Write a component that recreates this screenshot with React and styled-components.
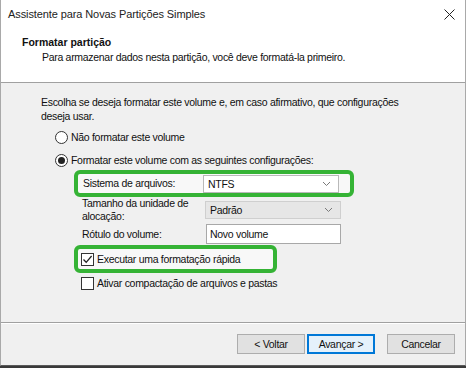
import React from "react";
import styled, { createGlobalStyle, css } from "styled-components";

const GlobalStyle = createGlobalStyle`
  html, body {
    margin: 0;
    padding: 0;
    background: #3a3a3a;
  }
  * { box-sizing: border-box; }
`;

const green = "#35b335";

const Window = styled.div`
  width: 466px;
  height: 366px;
  display: flex;
  flex-direction: column;
  background: #f0f0f0;
  border-left: 1px solid #a9a9a9;
  border-right: 1px solid #a9a9a9;
  border-bottom: 1px solid #5a5a5a;
  font-family: "Liberation Sans", Arial, sans-serif;
  font-size: 10.5px;
  letter-spacing: -0.3px;
  color: #111;
`;

const TitleBar = styled.div`
  height: 28px;
  background: #fff;
  display: flex;
  align-items: center;
  justify-content: space-between;
  padding: 0 8px 0 7px;
  font-size: 11px;
  letter-spacing: -0.1px;
  color: #222;
`;

const CloseBtn = styled.div`
  width: 16px;
  height: 16px;
  display: flex;
  align-items: center;
  justify-content: center;
`;

const Header = styled.div`
  height: 55px;
  background: #fff;
  border-bottom: 1px solid #a0a0a0;
  padding: 7px 0 0 21px;
`;

const HeaderTitle = styled.div`
  font-weight: bold;
  line-height: 15px;
  letter-spacing: 0;
`;

const HeaderSub = styled.div`
  line-height: 15px;
  padding-left: 20px;
`;

const Body = styled.div`
  flex: 1;
  padding: 12px 0 0 40px;
  display: flex;
  flex-direction: column;
`;

const Intro = styled.div`
  line-height: 14px;
  width: 380px;
`;

const Options = styled.div`
  display: flex;
  flex-direction: column;
  margin-left: 14px;
  margin-top: 7px;
`;

const RadioRow = styled.label`
  display: flex;
  align-items: center;
  gap: 3px;
  height: 14px;
  margin-bottom: ${(p) => p.$mb || 0}px;
`;

const RadioDot = styled.span`
  width: 13px;
  height: 13px;
  border-radius: 50%;
  border: 1px solid #333;
  background: #fff;
  display: flex;
  align-items: center;
  justify-content: center;
  &::after {
    content: "";
    width: 7px;
    height: 7px;
    border-radius: 50%;
    background: ${(p) => (p.$on ? "#222" : "transparent")};
  }
`;

const Settings = styled.div`
  display: flex;
  flex-direction: column;
  margin-left: 19px;
  margin-top: 3px;
`;

const FieldRow = styled.div`
  display: flex;
  align-items: center;
  width: 280px;
  padding: 0 10px 0 8px;
  min-height: ${(p) => p.$h}px;
  margin-top: ${(p) => p.$mt || 0}px;
  ${(p) =>
    p.$highlight &&
    css`
      border: 4px solid ${green};
      border-radius: 6px;
      padding-left: 5px;
      background: #f8f8f8;
    `}
`;

const Label = styled.div`
  width: ${(p) => (p.$highlight ? 120 : 123)}px;
  line-height: 13px;
`;

const Select = styled.div`
  width: 136px;
  height: 18px;
  display: flex;
  align-items: center;
  justify-content: space-between;
  padding: 0 7px 0 4px;
  border: 1px solid ${(p) => (p.$disabled ? "#cfcfcf" : "#b9b9b9")};
  background: ${(p) => (p.$disabled ? "#e6e6e6" : "#fff")};
`;

const TextInput = styled.div`
  width: 135px;
  height: 20px;
  display: flex;
  align-items: center;
  padding: 0 3px;
  border: 1px solid #a8a8a8;
  background: #fff;
  margin-left: 1px;
`;

const CheckRow = styled.div`
  display: flex;
  align-items: center;
  gap: 3px;
  width: ${(p) => (p.$highlight ? 203 : 280)}px;
  height: ${(p) => (p.$highlight ? 28 : 14)}px;
  padding-left: 7px;
  margin-top: ${(p) => p.$mt || 0}px;
  ${(p) =>
    p.$highlight &&
    css`
      border: 4px solid ${green};
      border-radius: 6px;
      padding-left: 3px;
      background: #f8f8f8;
    `}
`;

const Box = styled.span`
  width: 13px;
  height: 13px;
  border: 1px solid #333;
  background: #fff;
  display: flex;
  align-items: center;
  justify-content: center;
`;

const Footer = styled.div`
  height: 43px;
  border-top: 1px solid #a0a0a0;
  box-shadow: inset 0 1px 0 #fff;
  display: flex;
  align-items: center;
  justify-content: flex-end;
  padding: 0 10px 0 0;
  gap: 2px;
`;

const Button = styled.div`
  width: 68px;
  height: 20px;
  display: flex;
  align-items: center;
  justify-content: center;
  background: ${(p) => (p.$primary ? "#e5f1fb" : "#e1e1e1")};
  border: ${(p) => (p.$primary ? "2px solid #0078d7" : "1px solid #adadad")};
  margin-left: ${(p) => p.$ml || 0}px;
`;

const Chevron = () => (
  <svg width="9" height="6" viewBox="0 0 9 6">
    <path d="M1 1 L4.5 4.5 L8 1" fill="none" stroke="#7a7a7a" strokeWidth="1" />
  </svg>
);

const Check = () => (
  <svg width="11" height="11" viewBox="0 0 11 11">
    <path d="M1.5 5.5 L4.2 8.3 L9.6 2" fill="none" stroke="#222" strokeWidth="1.3" />
  </svg>
);

export default function App() {
  return (
    <>
      <GlobalStyle />
      <Window>
        <TitleBar>
          <span>Assistente para Novas Partições Simples</span>
          <CloseBtn>
            <svg width="11" height="11" viewBox="0 0 11 11">
              <path d="M0.5 0.5 L10.5 10.5 M10.5 0.5 L0.5 10.5" stroke="#222" strokeWidth="1" />
            </svg>
          </CloseBtn>
        </TitleBar>
        <Header>
          <HeaderTitle>Formatar partição</HeaderTitle>
          <HeaderSub>Para armazenar dados nesta partição, você deve formatá-la primeiro.</HeaderSub>
        </Header>
        <Body>
          <Intro>
            Escolha se deseja formatar este volume e, em caso afirmativo, que configurações deseja usar.
          </Intro>
          <Options>
            <RadioRow $mb={9}>
              <RadioDot />
              Não formatar este volume
            </RadioRow>
            <RadioRow>
              <RadioDot $on />
              Formatar este volume com as seguintes configurações:
            </RadioRow>
            <Settings>
              <FieldRow $highlight $h={27}>
                <Label $highlight>Sistema de arquivos:</Label>
                <Select>
                  NTFS
                  <Chevron />
                </Select>
              </FieldRow>
              <FieldRow $h={26}>
                <Label>
                  Tamanho da unidade de
                  <br />
                  alocação:
                </Label>
                <Select $disabled>
                  Padrão
                  <Chevron />
                </Select>
              </FieldRow>
              <FieldRow $h={22}>
                <Label>Rótulo do volume:</Label>
                <TextInput>Novo volume</TextInput>
              </FieldRow>
              <CheckRow $highlight $mt={0}>
                <Box>
                  <Check />
                </Box>
                Executar uma formatação rápida
              </CheckRow>
              <CheckRow $mt={3}>
                <Box />
                Ativar compactação de arquivos e pastas
              </CheckRow>
            </Settings>
          </Options>
        </Body>
        <Footer>
          <Button>&lt; Voltar</Button>
          <Button $primary>Avançar &gt;</Button>
          <Button $ml={10}>Cancelar</Button>
        </Footer>
      </Window>
    </>
  );
}
